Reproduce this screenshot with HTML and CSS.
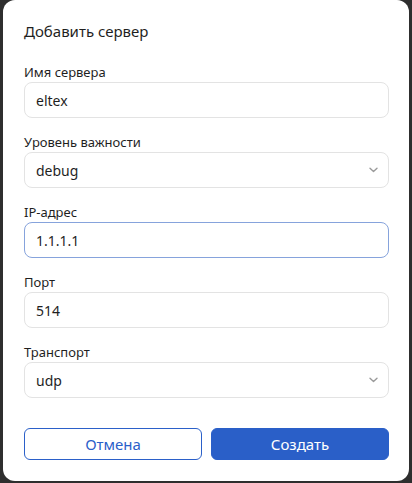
FILE: index.html
```html
<!DOCTYPE html>
<html lang="ru">
<head>
<meta charset="utf-8">
<link rel="stylesheet" href="styles.css">
</head>
<body>
<div class="dialog">
  <h2 class="title">Добавить сервер</h2>
  <div class="field">
    <label class="label">Имя сервера</label>
    <div class="input">eltex</div>
  </div>
  <div class="field">
    <label class="label">Уровень важности</label>
    <div class="input select">debug
      <svg class="chev" width="9" height="6" viewBox="0 0 9 6"><path d="M1 1.2l3.5 3.3 3.5-3.3" fill="none" stroke="#9a9a9a" stroke-width="1.4" stroke-linecap="round" stroke-linejoin="round"/></svg>
    </div>
  </div>
  <div class="field">
    <label class="label">IP-адрес</label>
    <div class="input focus">1.1.1.1</div>
  </div>
  <div class="field">
    <label class="label">Порт</label>
    <div class="input">514</div>
  </div>
  <div class="field">
    <label class="label">Транспорт</label>
    <div class="input select">udp
      <svg class="chev" width="9" height="6" viewBox="0 0 9 6"><path d="M1 1.2l3.5 3.3 3.5-3.3" fill="none" stroke="#9a9a9a" stroke-width="1.4" stroke-linecap="round" stroke-linejoin="round"/></svg>
    </div>
  </div>
  <div class="actions">
    <button class="btn btn-outline">Отмена</button>
    <button class="btn btn-primary">Создать</button>
  </div>
</div>
</body>
</html>
```
FILE: styles.css
```css
html, body {
  margin: 0;
  padding: 0;
  background: #2e2e2e;
  height: 483px;
  overflow: hidden;
}
body {
  font-family: "Noto Sans", "Open Sans", sans-serif;
  color: #1f1f1f;
  padding: 0 3px;
}
.dialog {
  background: #fff;
  border-radius: 12px;
  width: 406px;
  height: 481px;
  box-sizing: border-box;
  padding: 19px 20px 0 21px;
}
.title {
  margin: 0 0 19px;
  font-size: 15px;
  line-height: 24px;
  font-weight: 450;
}
.field {
  display: flex;
  flex-direction: column;
  margin-bottom: 14px;
}
.label {
  font-size: 13px;
  line-height: 20px;
  font-weight: 450;
}
.input {
  height: 36px;
  box-sizing: border-box;
  border: 1px solid #e3e3e3;
  border-radius: 8px;
  padding: 0 11px;
  display: flex;
  align-items: center;
  font-size: 14px;
}
.input.focus {
  border-color: #86a3dc;
}
.select {
  justify-content: space-between;
  padding-right: 10px;
}
.chev {
  display: block;
}
.actions {
  display: grid;
  grid-template-columns: 1fr 1fr;
  gap: 9px;
  margin-top: 30px;
}
.btn {
  height: 32px;
  border-radius: 6px;
  font-family: "Noto Sans", "Open Sans", sans-serif;
  font-size: 15px;
  cursor: pointer;
}
.btn-outline {
  background: #fff;
  border: 1px solid #2b60c9;
  color: #2b60c9;
}
.btn-primary {
  background: #2a5fc8;
  border: 1px solid #2a5fc8;
  color: #fff;
}
```
